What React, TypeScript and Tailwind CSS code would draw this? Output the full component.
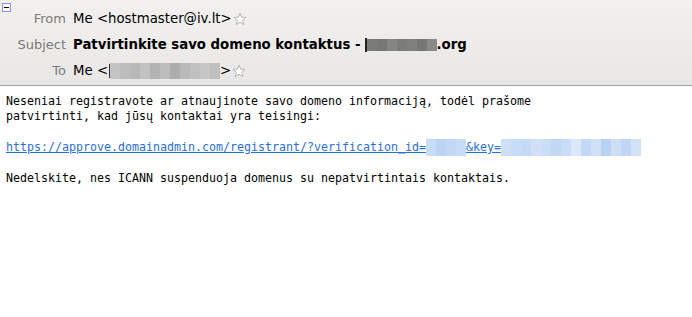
const sans = { fontFamily: '"DejaVu Sans", Verdana, sans-serif' };

function Star() {
  return (
    <svg width="14" height="14" viewBox="0 0 14 14" className="ml-[1px] shrink-0">
      <path
        d="M7 1 L8.6 5.1 L13 5.4 L9.6 8.2 L10.8 12.6 L7 10.2 L3.2 12.6 L4.4 8.2 L1 5.4 L5.4 5.1 Z"
        fill="#ffffff"
        stroke="#b4b4b4"
        strokeWidth="1"
        strokeLinejoin="round"
      />
    </svg>
  );
}

function Blur({ tones, h = 'h-[16px]' }: { tones: string[]; h?: string }) {
  return (
    <span className={`inline-flex ${h} items-stretch align-middle`}>
      {tones.map((t, i) => (
        <span key={i} className="w-[10px]" style={{ background: t }} />
      ))}
    </span>
  );
}

function Row({ label, children }: { label: string; children: React.ReactNode }) {
  return (
    <div className="flex h-[26px] items-center">
      <span className="w-[66px] shrink-0 text-right text-[13px] text-[#7a7a7a]">{label}</span>
      <span className="ml-[7px] flex items-center text-[13.3px] text-black">{children}</span>
    </div>
  );
}

export default function App() {
  return (
    <div className="h-[317px] w-[692px] bg-white">
      <header
        className="relative h-[86px] border-b border-[#a3a3a3] bg-gradient-to-b from-[#f2f1f0] to-[#e8e7e5] pt-[6px]"
        style={sans}
      >
        <span className="absolute left-[2px] top-[3px] flex h-[9px] w-[9px] items-center justify-center border border-[#8a8aff] bg-white">
          <span className="h-[1px] w-[5px] bg-black" />
        </span>
        <Row label="From">
          Me &lt;hostmaster@iv.lt&gt;
          <Star />
        </Row>
        <Row label="Subject">
          <span className="font-bold">Patvirtinkite savo domeno kontaktus - </span>
          <span className="ml-[4px] h-[14px] w-[2px] bg-[#222]" />
          <Blur
            h="h-[12px]"
            tones={['#7a7a7a', '#777', '#858585', '#7c7c7c', '#808080', '#777', '#8a8a8a']}
          />
          <span className="font-bold">.org</span>
        </Row>
        <Row label="To">
          Me &lt;
          <span className="ml-[1px] h-[14px] w-[1px] bg-[#333]" />
          <Blur
            tones={['#c4c4c4', '#bdbdbd', '#b8b8b8', '#c2c2c2', '#b3b3b3', '#bcbcbc', '#adadad', '#b9b9b9', '#c0c0c0', '#c6c6c6', '#bfbfbf']}
          />
          &gt;
          <Star />
        </Row>
      </header>
      <div
        className="px-[6px] pt-[8px] text-[11.63px] leading-[15px] text-black"
        style={{ fontFamily: '"DejaVu Sans Mono", monospace' }}
      >
        <p>Neseniai registravote ar atnaujinote savo domeno informaciją, todėl prašome</p>
        <p>patvirtinti, kad jūsų kontaktai yra teisingi:</p>
        <p className="mt-[15px]">
          <a href="#" className="text-[#2a6fd6] underline">
            https://approve.domainadmin.com/registrant/?verification_id=
            <Blur h="h-[17px]" tones={['#c8dcf5', '#bcd4f3', '#c2d8f4', '#c9dcf5']} />
            &amp;key=
            <Blur
              h="h-[17px]"
              tones={['#cde0f6', '#c9dcf5', '#c4d9f5', '#d0e1f7', '#cbdef6', '#c1d7f4', '#cadcf6', '#dbe8f9', '#c2d8f4', '#cfe0f6', '#b9d2f3', '#cddff6', '#c0d6f4', '#d3e3f7']}
            />
          </a>
        </p>
        <p className="mt-[15px]">Nedelskite, nes ICANN suspenduoja domenus su nepatvirtintais kontaktais.</p>
      </div>
    </div>
  );
}
